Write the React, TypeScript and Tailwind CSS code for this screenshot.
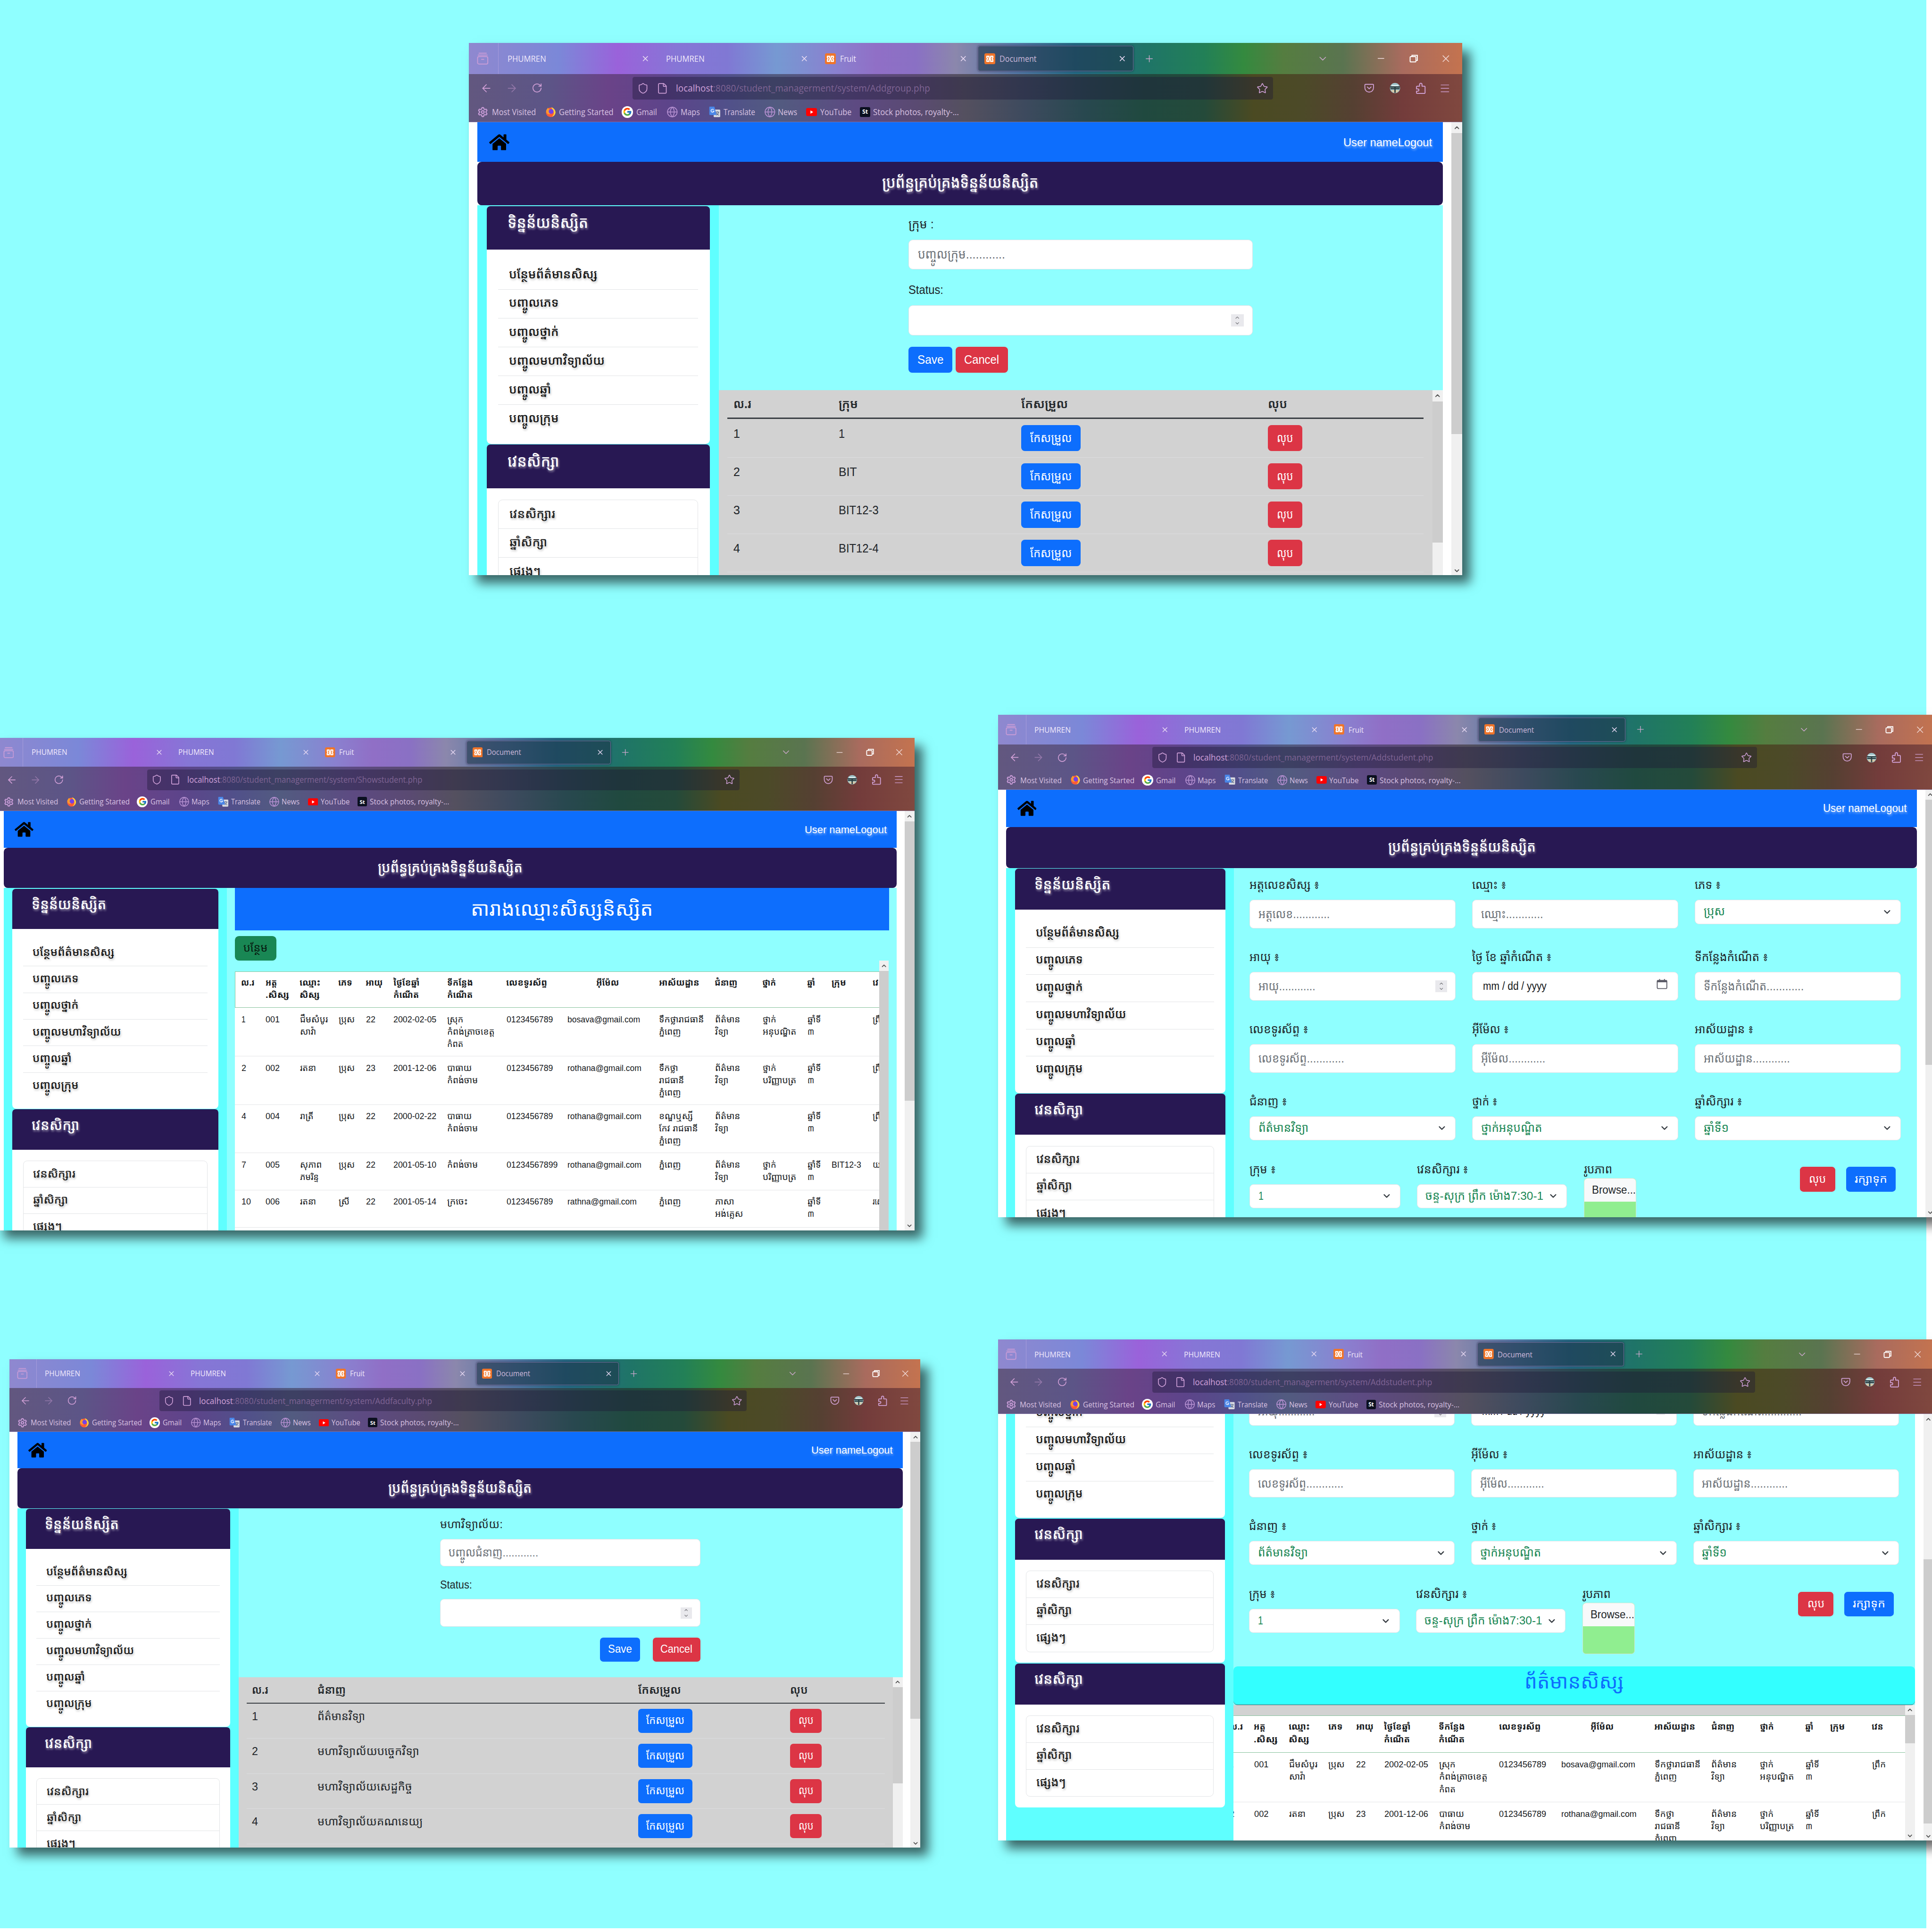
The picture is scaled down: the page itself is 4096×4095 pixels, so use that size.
import React, { useLayoutEffect, useRef } from "react";
import { FaHome } from "react-icons/fa";
import { FcGoogle } from "react-icons/fc";
import {
  ArrowLeft,
  ArrowRight,
  ChevronDown,
  ChevronUp,
  File,
  Globe,
  Menu,
  Minus,
  Plus,
  RotateCw,
  Settings,
  Shield,
  Star,
  X,
} from "lucide-react";

/* Text run stretched or condensed to a given width. */
function T({ w, className = "", children }: { w: number; className?: string; children: React.ReactNode }) {
  const outer = useRef<HTMLSpanElement>(null);
  const inner = useRef<HTMLSpanElement>(null);
  useLayoutEffect(() => {
    const o = outer.current;
    const i = inner.current;
    if (!o || !i) return;
    i.style.transform = "none";
    const natural = i.getBoundingClientRect().width;
    if (natural > 0) i.style.transform = `scaleX(${o.getBoundingClientRect().width / natural})`;
  });
  return (
    <span ref={outer} className={`inline-block shrink-0 text-left align-top whitespace-nowrap ${className}`} style={{ width: w }}>
      <span ref={inner} className="inline-block origin-left whitespace-nowrap">
        {children}
      </span>
    </span>
  );
}

/* ---------- browser chrome ---------- */

function XamppIcon() {
  return (
    <svg width="15" height="15" viewBox="0 0 16 16" className="shrink-0">
      <rect width="16" height="16" rx="2.500" fill="#f0752a" />
      <path
        d="M8 8L6.800 6.500V4.300H3.600V6.500L4.700 8L3.600 9.500V11.700H6.800V9.500L8 8L9.200 6.500V4.300H12.400V6.500L11.300 8L12.400 9.500V11.700H9.200V9.500Z"
        fill="none"
        stroke="#fff"
        strokeWidth="1.700"
        strokeLinejoin="round"
      />
    </svg>
  );
}

function Tab({ title, w, icon, active }: { title: string; w: number; icon?: boolean; active?: boolean }) {
  return (
    <div className="w-[218.400px] shrink-0 pt-[4px]">
      <div
        className={
          active
            ? "flex h-[35px] w-[214px] items-center rounded-[3px] border border-[#6f6a96] bg-[#1c3347]/60 pr-[9px] pl-[8px] shadow-[0_0_3px_rgba(20,20,50,0.6)]"
            : "flex h-[35px] w-[214px] items-center pr-[10px] pl-[8px]"
        }
      >
        {icon && (
          <span className="mr-[6px]">
            <XamppIcon />
          </span>
        )}
        <T w={w} className={active ? "text-[#cdb9dc]" : "text-[#f1e9fb]"}>
          {title}
        </T>
        <X size={12} strokeWidth={2} className="ml-auto text-[#e6d8f2]" />
      </div>
    </div>
  );
}

function Bookmark({ width, children }: { width: string; children: React.ReactNode }) {
  return <div className={`flex items-center ${width}`}>{children}</div>;
}

function FirefoxIcon() {
  return (
    <svg width="15" height="15" viewBox="0 0 16 16">
      <circle cx="8" cy="8.400" r="7" fill="#ff5a36" />
      <path d="M1.200 6.500C2 3.500 3.500 2.500 4 1.500C4.500 3 5.500 3.500 6.500 4C5 6 6 9 8.500 10C5 12.500 1.500 10.500 1.200 6.500Z" fill="#ff9a2e" />
      <path d="M9 .800C12.500 2 15.200 5.200 15 9C14.500 12 12 14.500 9.500 15C13 12 13 9 12 7C11.500 4.500 9.500 3.500 9 .800Z" fill="#ffd43b" />
      <circle cx="8.600" cy="7" r="3.600" fill="#7542e5" />
    </svg>
  );
}

function TranslateIcon() {
  return (
    <svg width="16" height="15" viewBox="0 0 16 15">
      <rect x="6.500" y="4" width="9" height="10.500" rx="1" fill="#d9dbe2" />
      <path d="M9 7.500h5M11.500 6.500v1M13.500 7.500c-.5 2-2 3.500-3.500 4.200M10 8.500c.8 1.500 2.200 2.800 3.800 3.500" stroke="#5c6b8a" strokeWidth=".9" fill="none" />
      <path d="M1 0h6.500l3 11.500H1.500a1 1 0 0 1-1-1V1a1 1 0 0 1 .5-1z" fill="#4a86e8" />
      <path d="M6.600 4.300A2.100 2.100 0 1 0 7 6.200H5" stroke="#e9f0ff" strokeWidth="1" fill="none" />
    </svg>
  );
}

function YoutubeIcon() {
  return (
    <svg width="15" height="11" viewBox="0 0 15 11">
      <rect width="15" height="11" rx="2.200" fill="#f00" />
      <path d="M6 3.200v4.600l3.800-2.300z" fill="#fff" />
    </svg>
  );
}

function PocketIcon() {
  return (
    <svg width="14" height="14" viewBox="0 0 16 16" fill="none" stroke="#cf9fd2" strokeWidth="1.400" strokeLinecap="round">
      <path d="M2.200 2h11.600a1 1 0 0 1 1 1v4.500a6.800 6.800 0 0 1-13.600 0V3a1 1 0 0 1 1-1z" />
      <path d="M5 6.200l3 2.900 3-2.900" />
    </svg>
  );
}

function AvatarIcon() {
  return (
    <svg width="15" height="15" viewBox="0 0 16 16">
      <circle cx="8" cy="8" r="7.500" fill="#9fc3c8" />
      <path d="M.8 6.500h14.400M1.200 9h13.600" stroke="#26383c" strokeWidth="1.800" />
      <path d="M2 11h12l-3 3.500H5z" fill="#d8c9a6" />
      <path d="M7 6.500h2V15H7z" fill="#2e3f42" />
      <path d="M3 4.500h10" stroke="#e9f6f6" strokeWidth="1.500" />
    </svg>
  );
}

function ExtensionIcon() {
  return (
    <svg width="15" height="16" viewBox="0 0 15 16" fill="none" stroke="#cf9fd2" strokeWidth="1.300" strokeLinejoin="round">
      <path d="M6.200 5V2.600a1.700 1.700 0 0 1 3.400 0V5h3.200a1 1 0 0 1 1 1v8a1 1 0 0 1-1 1H3a1 1 0 0 1-1-1v-2.200h1.800a1.500 1.500 0 0 0 0-3H2V6a1 1 0 0 1 1-1z" />
    </svg>
  );
}

function ArchiveIcon() {
  return (
    <svg width="16" height="17" viewBox="0 0 16 17" fill="none" stroke="#c79bd6" strokeWidth="1.300" strokeLinecap="round">
      <path d="M3 1.200h10M1.800 3.800h12.400" />
      <rect x="1" y="5.800" width="14" height="10.200" rx="1.800" />
      <path d="M6.500 9.500h3" />
    </svg>
  );
}

function CalendarIcon() {
  return (
    <svg width="16" height="15" viewBox="0 0 16 15" fill="none" stroke="#5b5b66" strokeWidth="1.300">
      <rect x="1" y="2" width="14" height="12" rx="1.500" />
      <path d="M1 3.600h14" strokeWidth="2.400" />
      <path d="M4.500 0v3M11.500 0v3" />
    </svg>
  );
}

function Chrome({ page, w }: { page: string; w: number }) {
  return (
    <div className="h-[109px] shrink-0 overflow-hidden text-[11.500px] leading-[16px] font-[Open_Sans,Noto_Sans,sans-serif]">
      <div className="flex h-[43px] items-start bg-[linear-gradient(90deg,#8f88cf_0%,#7b88d8_9%,#9a62da_15%,#8676d6_21%,#8078d4_26%,#7699d2_31%,#8a80cf_37%,#906fc6_41%,#8a70c4_45%,#8b87ac_49%,#5577a5_55%,#256a85_61%,#1f7468_68%,#228057_74%,#348a3f_78%,#557d40_82%,#5a7450_88%,#a96b5e_94%,#c4734f_100%)]">
        <div className="flex h-[43px] w-[41px] shrink-0 items-center border-r border-[#b9a9e0]/60 pl-[11px]">
          <ArchiveIcon />
        </div>
        <div className="flex pl-[4px]">
          <Tab title="PHUMREN" w={53} />
          <Tab title="PHUMREN" w={53} />
          <Tab title="Fruit" w={22} icon />
          <Tab title="Document" w={51} icon active />
        </div>
        <div className="flex h-[43px] flex-1 items-center text-[#cfa9cf]">
          <Plus size={15} strokeWidth={1.5} className="ml-[10px]" />
          <ChevronDown size={16} strokeWidth={1.5} className="ml-[223px]" />
          <Minus size={14} strokeWidth={1.500} className="ml-[65px] text-[#f3dfe0]" />
          <svg width="12" height="12" viewBox="0 0 12 12" fill="none" stroke="#fff" strokeWidth="1.300" className="ml-[32px]">
            <path d="M3.500 3V1.500H11V8.500H9.500" />
            <rect x="1" y="3.200" width="8" height="7.300" rx="1" />
          </svg>
          <X size={16} strokeWidth={1.500} className="ml-[30px] text-[#f0d9d6]" />
        </div>
      </div>
      <div className="h-[66px] border-b border-[#8f7fb0]/70 bg-[linear-gradient(90deg,#62577f_0%,#5c5587_8%,#6a4388_14%,#5d448a_20%,#51508a_26%,#525b80_31%,#5d4a82_39%,#5a4a72_45%,#54505f_50%,#3d4a5e_56%,#28484f_62%,#20493f_68%,#244a3a_74%,#4b4a22_79%,#4c4a28_84%,#554032_89%,#733c3b_94%,#80483f_100%)]">
        <div className="flex h-[38.500px] items-center">
          <div className="flex w-[225px] items-center text-[#d3a1d8]">
            <ArrowLeft size={17} strokeWidth={1.600} className="ml-[15.500px]" />
            <ArrowRight size={17} strokeWidth={1.600} className="ml-[18px] opacity-45" />
            <RotateCw size={15} strokeWidth={1.800} className="ml-[18.500px]" />
          </div>
          <div className="flex h-[31px] w-[881px] items-center rounded-[3px] bg-[#1d1838]/40 text-[#cfa0d8]">
            <Shield size={16} strokeWidth={1.700} className="ml-[6.500px]" />
            <File size={16} strokeWidth={1.700} className="ml-[11px]" />
            <T w={w} className="ml-[10px] text-[12.500px] text-[#7f6494]">
              <span className="text-[#d2a2dc]">localhost</span>:8080/student_managerment/system/{page}
            </T>
            <Star size={16} strokeWidth={1.600} className="mr-[7px] ml-auto" />
          </div>
          <div className="flex flex-1 items-center text-[#cf9fd2]">
            <span className="ml-[125px]">
              <PocketIcon />
            </span>
            <span className="ml-[21px]">
              <AvatarIcon />
            </span>
            <span className="ml-[20.500px]">
              <ExtensionIcon />
            </span>
            <Menu size={16} strokeWidth={1.400} className="ml-[18px]" />
          </div>
        </div>
        <div className="flex h-[27px] items-center pl-[12px] text-[#d9c2e2]">
          <Bookmark width="w-[93px]">
            <Settings size={15} strokeWidth={2.400} className="mr-[5px] text-[#c79bd6]" />
            <T w={60.5}>Most Visited</T>
          </Bookmark>
          <Bookmark width="w-[105px]">
            <FirefoxIcon />
            <T w={75} className="ml-[4px]">
              Getting Started
            </T>
          </Bookmark>
          <Bookmark width="w-[62px]">
            <span className="flex h-[16px] w-[16px] items-center justify-center rounded-full bg-white">
              <FcGoogle size={13} />
            </span>
            <T w={28.5} className="ml-[4px]">
              Gmail
            </T>
          </Bookmark>
          <Bookmark width="w-[58px]">
            <Globe size={16} strokeWidth={1.700} className="mr-[3px] text-[#b48fd0]" />
            <T w={26.5}>Maps</T>
          </Bookmark>
          <Bookmark width="w-[76px]">
            <TranslateIcon />
            <T w={43.5} className="ml-[4px]">
              Translate
            </T>
          </Bookmark>
          <Bookmark width="w-[58px]">
            <Globe size={16} strokeWidth={1.700} className="mr-[3px] text-[#b48fd0]" />
            <T w={26.7}>News</T>
          </Bookmark>
          <Bookmark width="w-[74px]">
            <YoutubeIcon />
            <T w={43} className="ml-[4px]">
              YouTube
            </T>
          </Bookmark>
          <Bookmark width="w-[140px]">
            <span className="flex h-[14px] w-[14px] items-center justify-center rounded-[2px] bg-[#0b1020] text-[8px] leading-none font-bold text-white">St</span>
            <T w={118} className="ml-[4px]">
              Stock photos, royalty-...
            </T>
          </Bookmark>
        </div>
      </div>
    </div>
  );
}

/* ---------- shared page parts ---------- */

function Scrollbar({ before, thumb, arrows = "both" }: { before: number; thumb: number; arrows?: "both" | "up" }) {
  return (
    <div className="flex h-full w-[14.500px] shrink-0 flex-col items-center bg-[#f0f0f0] text-[#505050]">
      <div className="flex h-[15px] shrink-0 items-center">
        <ChevronUp size={10} strokeWidth={3} />
      </div>
      <div style={{ height: before }} />
      <div className="w-full bg-[#cdcdcd]" style={{ height: thumb }} />
      {arrows === "both" && (
        <div className="mt-auto flex h-[13px] shrink-0 items-center">
          <ChevronDown size={10} strokeWidth={3} />
        </div>
      )}
    </div>
  );
}

function CardHead({ w, children }: { w: number; children: React.ReactNode }) {
  return (
    <div className="h-[60px] rounded-t-[5px] bg-[#281853] pt-[8px] pl-[28.500px] text-[21.500px] leading-[30px] font-medium text-white [text-shadow:1px_2px_3px_rgba(255,255,255,0.5)]">
      <T w={w}>{children}</T>
    </div>
  );
}

const menu: [string, number][] = [
  ["បន្ថែមព័ត៌មានសិស្ស", 121.6],
  ["បញ្ចូលភេទ", 68.4],
  ["បញ្ចូលថ្នាក់", 68.4],
  ["បញ្ចូលមហាវិទ្យាល័យ", 131.7],
  ["បញ្ចូលឆ្នាំ", 58],
  ["បញ្ចូលក្រុម", 68.4],
];

const shifts: [string, number][] = [
  ["វេនសិក្សារ", 63],
  ["ឆ្នាំសិក្សា", 52],
  ["ផ្សេងៗ", 43],
];

function ShiftCard() {
  return (
    <div className="mb-[1px] rounded-[6px] bg-white pb-[15.600px]">
      <CardHead w={71}>វេនសិក្សា</CardHead>
      <div className="mx-[16px] mt-[16px] rounded-[6px] border border-[#e2e4e6] text-[17px] font-medium text-[#1c1c1c] [text-shadow:1px_2px_3px_rgba(0,0,0,0.25)]">
        {shifts.map(([t, w], i) => (
          <div key={t} className={i ? "h-[39.500px] border-t border-[#e2e4e6] pt-[6.500px] pl-[14.500px] leading-[24px]" : "h-[38.500px] pt-[7px] pl-[14.500px] leading-[24px]"}>
            <T w={w}>{t}</T>
          </div>
        ))}
      </div>
    </div>
  );
}

function Sidebar({ cards }: { cards: number }) {
  return (
    <div className="w-[331.700px] shrink-0 bg-[#5fffff] px-[12.500px] pt-[1px]">
      <div className="mb-[1px] rounded-[6px] bg-white pb-[14.400px]">
        <CardHead w={111}>ទិន្នន័យនិស្សិត</CardHead>
        <div className="mx-[16px] pt-[15px] text-[17px] font-medium text-[#111] [text-shadow:1px_2px_3px_rgba(0,0,0,0.25)]">
          {menu.map(([t, w], i) => (
            <div key={t} className={i ? "h-[39.600px] border-t border-[#e2e4e6] pt-[6px] pl-[14.500px] leading-[24px]" : "h-[39.600px] pt-[7px] pl-[14.500px] leading-[24px]"}>
              <T w={w}>{t}</T>
            </div>
          ))}
        </div>
      </div>
      <ShiftCard />
      {cards > 2 && <ShiftCard />}
    </div>
  );
}

function Page({ file, before, thumb, scroll = "", cards = 2, children }: { file: string; before: number; thumb: number; scroll?: string; cards?: number; children: React.ReactNode }) {
  return (
    <div className="flex h-[732px] w-[1366px] flex-col overflow-hidden bg-white font-[Liberation_Sans,Noto_Sans_Khmer,sans-serif] text-[#212529]">
      <Chrome page={file} w={349.5} />
      <div className="flex h-[623px] overflow-hidden">
        <div className="w-[1351.500px] shrink-0 overflow-hidden px-[12px]">
          <div className={scroll}>
            <div className="flex h-[54.600px] items-center bg-[#0d6efd] pr-[15px] pl-[16px]">
              <FaHome size={28} className="text-black" />
              <T w={122} className="ml-auto text-[16px] leading-[24px] font-medium text-white [text-shadow:1px_2px_3px_rgba(255,255,255,0.5)]">
                User nameLogout
              </T>
            </div>
            <div className="flex h-[59.600px] items-center justify-center rounded-[6px] bg-[#281853] pb-[2px] text-[21.500px] leading-[30px] font-medium text-white [text-shadow:1px_2px_3px_rgba(255,255,255,0.5)]">
              <T w={215}>ប្រព័ន្ធគ្រប់គ្រងទិន្នន័យនិស្សិត</T>
            </div>
            <div className="flex min-h-[800px] bg-[#8fffff]">
              <Sidebar cards={cards} />
              <div className="flex-1 overflow-hidden">{children}</div>
            </div>
          </div>
        </div>
        <div className="ml-auto">
          <Scrollbar before={before} thumb={thumb} />
        </div>
      </div>
    </div>
  );
}

function Spinner() {
  return (
    <span className="flex h-[17px] w-[17px] flex-col items-center justify-center bg-[#e9e9ed] text-[#77777c]">
      <ChevronUp size={8} strokeWidth={2.500} />
      <ChevronDown size={8} strokeWidth={2.500} />
    </span>
  );
}

function Input({ text, w, spinner }: { text?: string; w?: number; spinner?: boolean }) {
  return (
    <div className="flex h-[41.500px] items-center rounded-[6px] border border-[#dee2e6] bg-white px-[12px] text-[17.500px] leading-[24px] text-[#6b7177]">
      {text && <T w={w ?? 100}>{text}</T>}
      {spinner && (
        <span className="ml-auto">
          <Spinner />
        </span>
      )}
    </div>
  );
}

function Select({ text, w }: { text: string; w: number }) {
  return (
    <div className="flex h-[35.300px] items-center overflow-hidden rounded-[6px] border border-[#dee2e6] bg-white px-[12px] text-[17px] leading-[24px] text-[#198754]">
      <T w={w}>{text}</T>
      <ChevronDown size={15} strokeWidth={2.500} className="ml-auto shrink-0 text-[#343a40]" />
    </div>
  );
}

function Btn({ cls, w, children }: { cls: string; w: number; children: React.ReactNode }) {
  return (
    <div className={`flex h-[36px] items-center justify-center rounded-[5px] text-[16.500px] leading-[24px] text-white ${cls}`}>
      <T w={w}>{children}</T>
    </div>
  );
}

/* ---------- small list pages (groups, faculties) ---------- */

function ListTable({ cols, head, rows, thumb }: { cols: string; head: [string, number][]; rows: [string, string, number][]; thumb: number }) {
  return (
    <div className="flex h-[256px] overflow-hidden bg-[#d2d2d2]">
      <div className="flex-1 pr-[12px] pl-[12px]">
        <div className={`grid h-[39.500px] items-center border-b-2 border-[#3a3f44] pl-[8px] text-[17px] font-semibold ${cols}`}>
          {head.map(([t, w]) => (
            <T key={t} w={w} className="leading-[24px]">
              {t}
            </T>
          ))}
        </div>
        {rows.map(([n, t, w]) => (
          <div key={n} className={`grid h-[52.700px] items-start border-b border-[#dcdde0] pt-[8px] pl-[8px] text-[16.500px] leading-[24px] ${cols}`}>
            <span>{n}</span>
            <T w={w}>{t}</T>
            <Btn cls="w-[81.500px] bg-[#0d6efd]" w={57.4}>
              កែសម្រួល
            </Btn>
            <Btn cls="w-[47.500px] bg-[#dc3545]" w={22.5}>
              លុប
            </Btn>
          </div>
        ))}
      </div>
      <Scrollbar before={0} thumb={thumb} arrows="up" />
    </div>
  );
}

function GroupPage() {
  return (
    <Page file="Addgroup.php" before={0} thumb={414}>
      <div className="h-[254.500px] pt-[14px] pl-[261px]">
        <div className="w-[473.500px] text-[16.500px] leading-[24px]">
          <T w={35}>ក្រុម :</T>
          <div className="mt-[9px]">
            <Input text="បញ្ចូលក្រុម............" w={120} />
          </div>
          <div className="mt-[16px] mb-[9px] h-[24px]">
            <T w={48}>Status:</T>
          </div>
          <Input spinner />
          <div className="mt-[15.500px] flex gap-[4.500px]">
            <Btn cls="w-[60px] bg-[#0d6efd]" w={36}>
              Save
            </Btn>
            <Btn cls="w-[72px] bg-[#dc3545]" w={48}>
              Cancel
            </Btn>
          </div>
        </div>
      </div>
      <ListTable
        cols="grid-cols-[145px_251px_339px_1fr]"
        thumb={194}
        head={[
          ["ល.រ", 24.5],
          ["ក្រុម", 26.6],
          ["កែសម្រួល", 64.4],
          ["លុប", 26.6],
        ]}
        rows={[
          ["1", "1", 8.5],
          ["2", "BIT", 25],
          ["3", "BIT12-3", 55],
          ["4", "BIT12-4", 55],
        ]}
      />
    </Page>
  );
}

function FacultyPage() {
  return (
    <Page file="Addfaculty.php" before={0} thumb={415}>
      <div className="h-[253.500px] pt-[13px] pl-[302.500px]">
        <div className="w-[390px] text-[16.500px] leading-[24px]">
          <T w={94}>មហាវិទ្យាល័យ:</T>
          <div className="mt-[9px]">
            <Input text="បញ្ចូលជំនាញ............" w={134.6} />
          </div>
          <div className="mt-[16px] mb-[9px] h-[24px]">
            <T w={48}>Status:</T>
          </div>
          <Input spinner />
          <div className="mt-[16px] flex justify-end gap-[19px]">
            <Btn cls="w-[60px] bg-[#0d6efd]" w={36}>
              Save
            </Btn>
            <Btn cls="w-[71.500px] bg-[#dc3545]" w={48}>
              Cancel
            </Btn>
          </div>
        </div>
      </div>
      <ListTable
        cols="grid-cols-[98px_481.500px_227.500px_1fr]"
        thumb={144}
        head={[
          ["ល.រ", 24.5],
          ["ជំនាញ", 42.5],
          ["កែសម្រួល", 64.4],
          ["លុប", 26.6],
        ]}
        rows={[
          ["1", "ព័ត៌មានវិទ្យា", 71.4],
          ["2", "មហាវិទ្យាល័យបច្ចេកវិទ្យា", 152.6],
          ["3", "មហាវិទ្យាល័យសេដ្ឋកិច្ច", 142],
          ["4", "មហាវិទ្យាល័យគណនេយ្យ", 158],
        ]}
      />
    </Page>
  );
}

/* ---------- student table ---------- */

type Line = [string, number];

const phnomPenh: Line = ["ភ្នំពេញ", 32.6];
const male: Line[] = [["ប្រុស", 24]];
const info: Line[] = [["ព័ត៌មាន", 37.4], ["វិទ្យា", 20]];
const year3: Line[] = [["ឆ្នាំទី", 20], ["៣", 10]];
const degree: Line[] = [["ថ្នាក់", 20], ["បរិញ្ញាបត្រ", 50]];
const morning: Line[] = [["ព្រឹក", 20]];

const studentHead: Line[][] = [
  [["ល.រ", 20]],
  [["អត្ត", 17], [".សិស្ស", 35]],
  [["ឈ្មោះ", 31], ["សិស្ស", 30]],
  [["ភេទ", 21]],
  [["អាយុ", 25.6]],
  [["ថ្ងៃខែឆ្នាំ", 39], ["កំណើត", 38]],
  [["ទីកន្លែង", 38.4], ["កំណើត", 38]],
  [["លេខទូរស័ព្ទ", 61]],
  [["អ៊ីម៉ែល", 34]],
  [["អាស័យដ្ឋាន", 60]],
  [["ជំនាញ", 34]],
  [["ថ្នាក់", 20.5]],
  [["ឆ្នាំ", 12]],
  [["ក្រុម", 21.6]],
  [["វេន", 17]],
];

const students: { h: number; cells: Line[][] }[] = [
  {
    h: 72.2,
    cells: [[["1", 6]], [["001", 21]], [["ជឹមសំបូរ", 41.5], ["សាវ៉ា", 24]], male, [["22", 14]], [["2002-02-05", 64]], [["ស្រុក", 24], ["កំពង់ត្រាចខេត្ត", 70.6], ["កំពត", 24]], [["0123456789", 69]], [["bosava@gmail.com", 108]], [["ទឹកថ្លារាជធានី", 67], phnomPenh], info, [["ថ្នាក់", 20], ["អនុបណ្ឌិត", 50]], year3, [], morning],
  },
  {
    h: 72,
    cells: [[["2", 7]], [["002", 21]], [["រតនា", 24]], male, [["23", 14]], [["2001-12-06", 64]], [["បាធាយ", 36.7], ["កំពង់ចាម", 45.7]], [["0123456789", 69]], [["rothana@gmail.com", 110]], [["ទឹកថ្លា", 28.6], ["រាជធានី", 37.4], phnomPenh], info, degree, year3, [], morning],
  },
  {
    h: 71.7,
    cells: [[["4", 7]], [["004", 21]], [["រាត្រី", 20]], male, [["22", 14]], [["2000-02-22", 64]], [["បាធាយ", 36.7], ["កំពង់ចាម", 45.7]], [["0123456789", 69]], [["rothana@gmail.com", 110]], [["ខណ្ឌឬស្សី", 50.5], ["កែវ រាជធានី", 58], phnomPenh], info, [], year3, [], morning],
  },
  {
    h: 55.3,
    cells: [[["7", 7]], [["005", 21]], [["សុភាព", 32.5], ["ភមរិន្ទ", 28]], male, [["22", 14]], [["2001-05-10", 64]], [["កំពង់ចាម", 45.7]], [["01234567899", 76]], [["rothana@gmail.com", 110]], [phnomPenh], info, degree, year3, [["BIT12-3", 44]], [["យប់", 20]]],
  },
  {
    h: 55.6,
    cells: [[["10", 14]], [["006", 21]], [["រតនា", 24]], [["ស្រី", 16]], [["22", 14]], [["2001-05-14", 64]], [["ក្រចេះ", 30.5]], [["0123456789", 69]], [["rathna@gmail.com", 103]], [phnomPenh], [["ភាសា", 28.6], ["អង់គ្លេស", 41.8]], [], year3, [], [["រសៀល", 30]]],
  },
];

const studentCols = "grid-cols-[36px_51px_57.500px_40.500px_41px_80px_88px_91px_136px_83px_71px_66.500px_36px_61px_50px]";

function StudentTable({ count }: { count: number }) {
  return (
    <div className="w-[1000px] bg-white text-[13px] leading-[18.200px] text-[#15181b]">
      <div className={`grid h-[54.500px] border border-[#86c29c] pt-[7px] pl-[1px] font-bold ${studentCols}`}>
        {studentHead.map((cell, i) => (
          <div key={i} className={i === 8 ? "flex flex-col items-center" : "flex flex-col items-start pl-[8px]"}>
            {cell.map(([t, w]) => (
              <T key={t} w={w}>
                {t}
              </T>
            ))}
          </div>
        ))}
      </div>
      {students.slice(0, count).map((row, r) => (
        <div key={r} className={`grid border-b border-[#e3e5e7] pt-[8px] pl-[2px] ${studentCols}`} style={{ height: row.h }}>
          {row.cells.map((cell, i) => (
            <div key={i} className="flex flex-col items-start pl-[8px]">
              {cell.map(([t, w]) => (
                <T key={t} w={w}>
                  {t}
                </T>
              ))}
            </div>
          ))}
        </div>
      ))}
      <div className="h-[20px]" />
    </div>
  );
}

function ShowPage() {
  return (
    <Page file="Showstudent.php" before={0} thumb={415}>
      <div className="px-[11.500px]">
        <div className="flex h-[63px] items-center justify-center bg-[#0d6efd] text-[29px] leading-[34px] text-white">
          <T w={271}>តារាងឈ្មោះសិស្សនិស្សិត</T>
        </div>
        <div className="mt-[8.500px] flex h-[36.500px] w-[62px] items-center justify-center rounded-[6px] bg-[#198754] pb-[2px] text-[17px] leading-[24px] text-[#06170e]">
          <T w={36}>បន្ថែម</T>
        </div>
        <div className="flex h-[401px] overflow-hidden">
          <div className="w-[958px] overflow-hidden pt-[15.700px]">
            <StudentTable count={5} />
          </div>
          <Scrollbar before={0} thumb={400} arrows="up" />
        </div>
      </div>
    </Page>
  );
}

/* ---------- add-student form ---------- */

function Field({ label, w, children }: { label: string; w: number; children: React.ReactNode }) {
  return (
    <div className="text-[17px] leading-[24px]">
      <div className="mb-[9px] h-[24px]">
        <T w={w}>{label}</T>
      </div>
      {children}
    </div>
  );
}

function AddStudentPage({ scrolled, before, thumb }: { scrolled?: boolean; before: number; thumb: number }) {
  return (
    <Page file="Addstudent.php" before={before} thumb={thumb} scroll={scrolled ? "-mt-[290.500px]" : ""} cards={scrolled ? 3 : 2}>
      <div className="h-[545px] pt-[13.500px] pr-[23.500px] pl-[23px]">
        <div className="grid grid-cols-3 gap-x-[24px]">
          <div className="h-[105.200px]">
            <Field label="អត្តលេខសិស្ស ៖" w={102}>
              <Input text="អត្តលេខ............" w={104} />
            </Field>
          </div>
          <Field label="ឈ្មោះ ៖" w={50}>
            <Input text="ឈ្មោះ............" w={90.5} />
          </Field>
          <Field label="ភេទ ៖" w={38}>
            <Select text="ប្រុស" w={31} />
          </Field>
          <div className="h-[105.200px]">
            <Field label="អាយុ ៖" w={43.6}>
              <Input text="អាយុ............" w={83} spinner />
            </Field>
          </div>
          <Field label="ថ្ងៃ ខែ ឆ្នាំកំណើត ៖" w={116}>
            <div className="flex h-[41.500px] items-center rounded-[6px] border border-[#dee2e6] bg-white px-[15px] text-[#15181b]">
              <T w={92.7}>mm / dd / yyyy</T>
              <span className="mb-[6px] ml-auto">
                <CalendarIcon />
              </span>
            </div>
          </Field>
          <Field label="ទីកន្លែងកំណើត ៖" w={107}>
            <Input text="ទីកន្លែងកំណើត............" w={146} />
          </Field>
          <div className="h-[104.800px]">
            <Field label="លេខទូរស័ព្ទ ៖" w={86}>
              <Input text="លេខទូរស័ព្ទ............" w={125} />
            </Field>
          </div>
          <Field label="អ៊ីម៉ែល ៖" w={53.6}>
            <Input text="អ៊ីម៉ែល............" w={93.6} />
          </Field>
          <Field label="អាស័យដ្ឋាន ៖" w={85.7}>
            <Input text="អាស័យដ្ឋាន............" w={125.7} />
          </Field>
          <div className="h-[99px]">
            <Field label="ជំនាញ ៖" w={55}>
              <Select text="ព័ត៌មានវិទ្យា" w={73} />
            </Field>
          </div>
          <Field label="ថ្នាក់ ៖" w={37}>
            <Select text="ថ្នាក់អនុបណ្ឌិត" w={89} />
          </Field>
          <Field label="ឆ្នាំសិក្សារ ៖" w={69.4}>
            <Select text="ឆ្នាំទី១" w={36.5} />
          </Field>
        </div>
        <div className="flex items-start">
          <div className="w-[220px]">
            <Field label="ក្រុម ៖" w={38.5}>
              <Select text="1" w={7.5} />
            </Field>
          </div>
          <div className="ml-[23.500px] w-[219px]">
            <Field label="វេនសិក្សារ ៖" w={75}>
              <Select text="ចន្ទ-សុក្រ ព្រឹក ម៉ោង7:30-1" w={172} />
            </Field>
          </div>
          <div className="ml-[24.500px] w-[76.500px] text-[17px] leading-[24px]">
            <T w={41.3}>រូបភាព</T>
            <div className="h-[75px] overflow-hidden rounded-[5px] border border-[#cfe8d0] bg-[#90ee90]">
              <div className="h-[34px] overflow-hidden bg-[#f8f9fa] pt-[5px] pl-[11px] text-[16.500px] whitespace-nowrap text-[#212529]">
                <T w={64}>Browse...</T>
              </div>
            </div>
          </div>
          <div className="mt-[8px] ml-auto flex gap-[15.500px] pr-[7.500px]">
            <Btn cls="w-[52px] bg-[#dc3545]" w={25}>
              លុប
            </Btn>
            <Btn cls="w-[72.500px] bg-[#0d6efd]" w={47.5}>
              រក្សាទុក
            </Btn>
          </div>
        </div>
      </div>
      {scrolled && (
        <>
          <div className="flex h-[56px] items-center justify-center rounded-[6px] border-b border-[#3b5f66] bg-[#33ffff] pb-[11px] text-[29px] leading-[34px] text-[#0d6efd]">
            <T w={145}>ព័ត៌មានសិស្ស</T>
          </div>
          <div className="flex h-[198px] overflow-hidden">
            <div className="w-[981px] overflow-hidden bg-[#d2d2d2] pt-[15.500px]">
              <div className="-ml-[15.700px]">
                <StudentTable count={2} />
              </div>
            </div>
            <div className="h-[198px]">
              <Scrollbar before={0} thumb={41} />
            </div>
          </div>
        </>
      )}
    </Page>
  );
}

/* ---------- collage ---------- */

const shadow = "absolute shadow-[17px_17px_22px_rgba(0,0,0,0.6)]";

export default function App() {
  return (
    <div className="relative h-[4095px] w-[4096px] overflow-hidden bg-white">
      <div className="h-[4087px] w-[4084px] bg-[#8fffff]" />
      <div className={`${shadow} top-[91px] left-[994px]`}>
        <div className="[zoom:1.5416]">
          <GroupPage />
        </div>
      </div>
      <div className={`${shadow} top-[1564px] left-[-9px]`}>
        <div className="[zoom:1.426]">
          <ShowPage />
        </div>
      </div>
      <div className={`${shadow} top-[1515px] left-[2116px]`}>
        <div className="[zoom:1.4545]">
          <AddStudentPage before={0} thumb={386} />
        </div>
      </div>
      <div className={`${shadow} top-[2881px] left-[20px]`}>
        <div className="[zoom:1.4136]">
          <FacultyPage />
        </div>
      </div>
      <div className={`${shadow} top-[2839px] left-[2116px]`}>
        <div className="[zoom:1.4514]">
          <AddStudentPage scrolled before={197} thumb={386} />
        </div>
      </div>
    </div>
  );
}
